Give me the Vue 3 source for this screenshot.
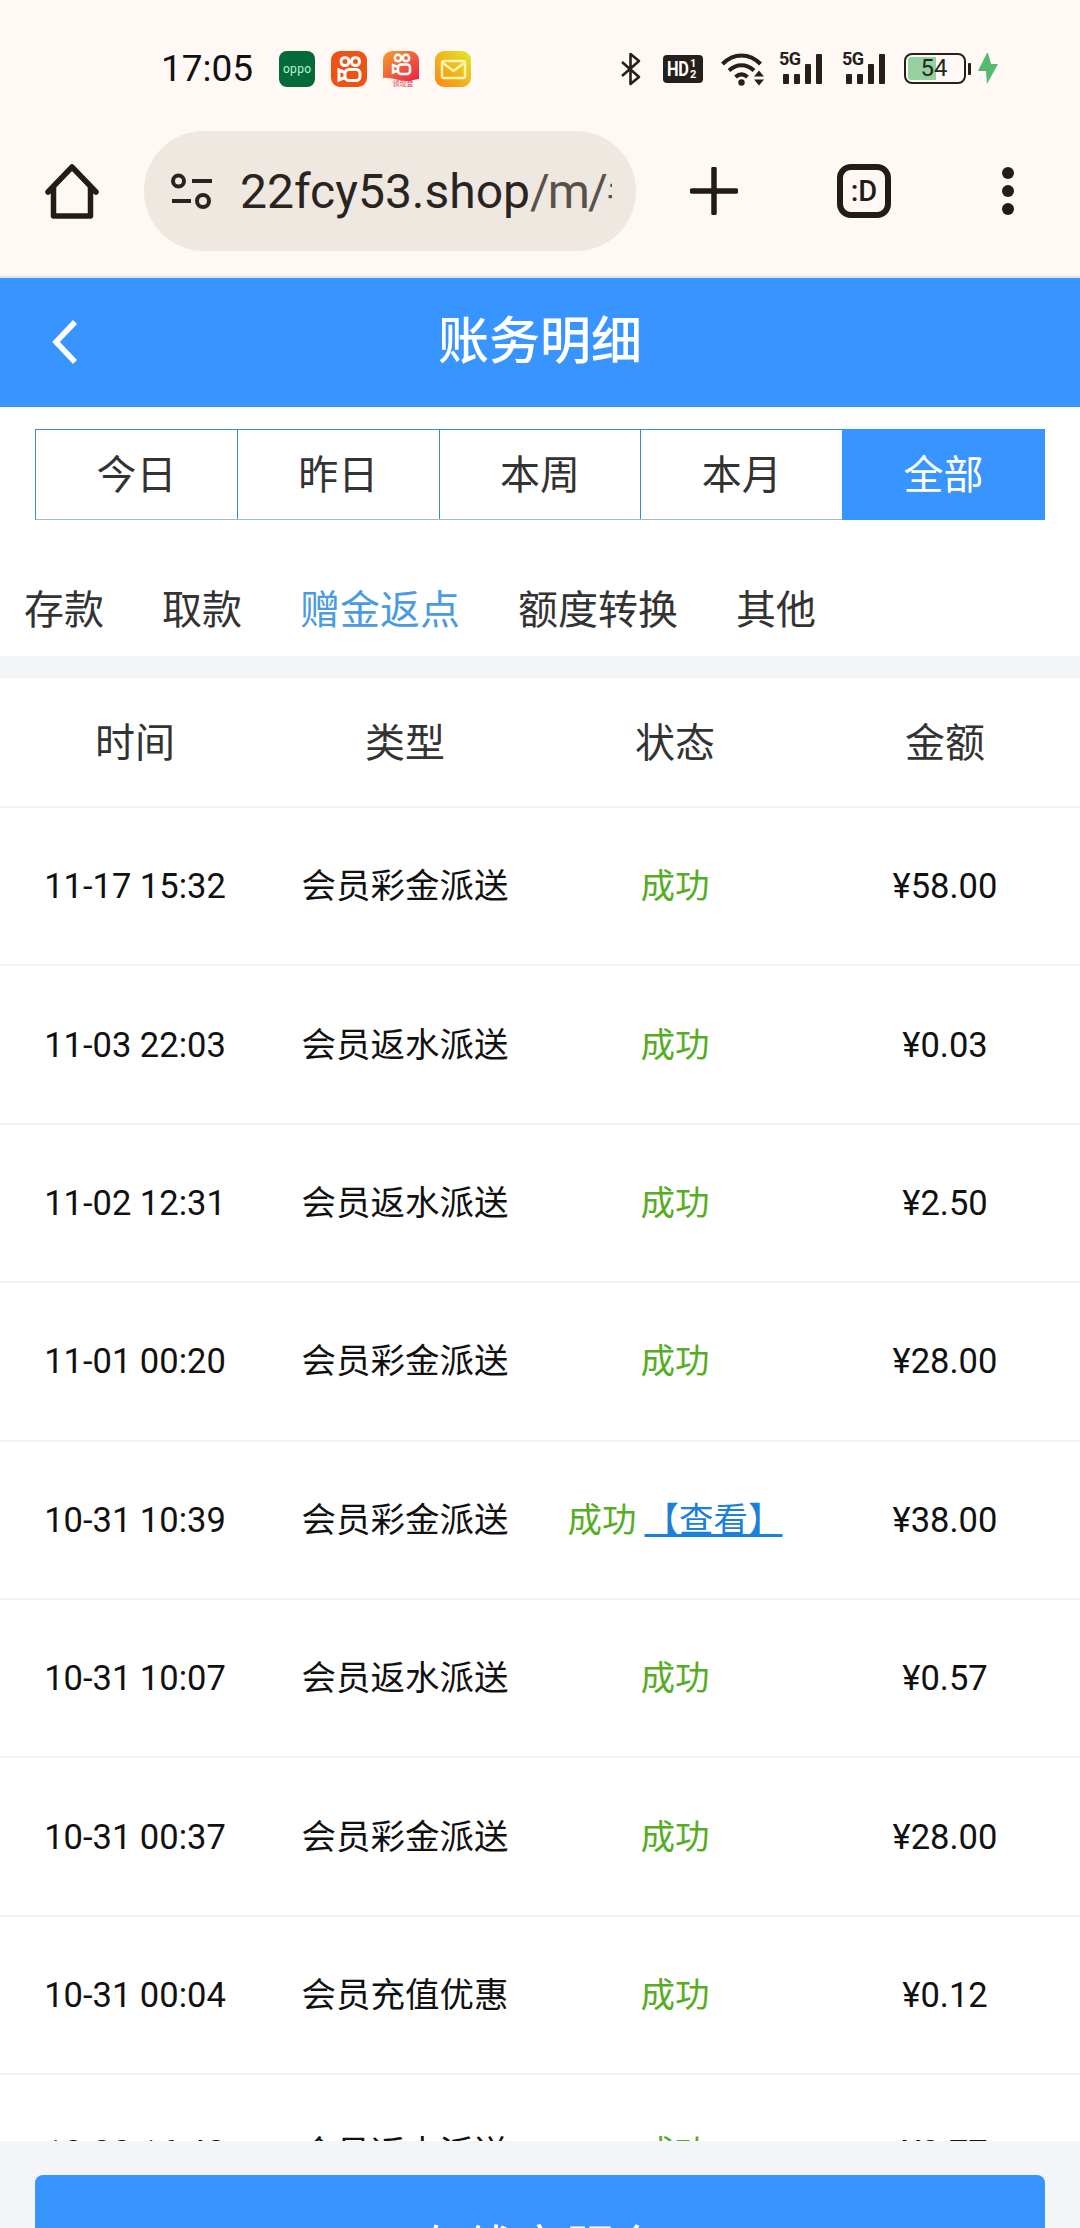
<template>
  <div class="screen">
    <div class="browser-top">
      <div class="status-bar">
        <span class="clock">17:05</span>
        <div class="notify-icons">
          <svg class="app-icon" viewBox="0 0 36 36">
            <rect width="36" height="36" rx="8" fill="#056a3a" />
            <text x="18" y="21.500" text-anchor="middle" font-size="12" textLength="28" fill="#b6f5cf" font-family="Roboto, sans-serif">oppo</text>
          </svg>
          <svg class="app-icon" viewBox="0 0 36 36">
            <rect width="36" height="36" rx="9" fill="#ee5215" />
            <g fill="none" stroke="#fff" stroke-width="3">
              <circle cx="14" cy="10.500" r="4" />
              <circle cx="24.500" cy="10.500" r="4" />
              <rect x="14" y="18.500" width="15" height="11" rx="4" />
              <path d="M14 21.500l-6-2.500v10l6-2.500" />
            </g>
          </svg>
          <svg class="app-icon" viewBox="0 0 36 36">
            <defs>
              <linearGradient id="kuaiGrad" x1="0" y1="0" x2="1" y2="1">
                <stop offset="0" stop-color="#f8a028" />
                <stop offset="1" stop-color="#ea1f4a" />
              </linearGradient>
            </defs>
            <path d="M0 9a9 9 0 0 1 9-9h18a9 9 0 0 1 9 9v19c-3 0-6 1-8 2C18 31 8 26 0 27z" fill="url(#kuaiGrad)" />
            <text x="20" y="35" text-anchor="middle" font-size="7" fill="#d8404f" font-family="'Noto Sans CJK SC', sans-serif">领现金</text>
            <g fill="none" stroke="#fff" stroke-width="2.500">
              <circle cx="15" cy="7" r="3.200" />
              <circle cx="23" cy="7" r="3.200" />
              <rect x="15" y="13.500" width="12" height="9.500" rx="3" />
              <path d="M15 16l-5-2v7.500l5-2" />
            </g>
          </svg>
          <svg class="app-icon" viewBox="0 0 36 36">
            <defs>
              <linearGradient id="mailGrad" x1="1" y1="0" x2="0" y2="1">
                <stop offset="0" stop-color="#e0ea28" />
                <stop offset="1" stop-color="#ff8412" />
              </linearGradient>
            </defs>
            <rect width="36" height="36" rx="9" fill="url(#mailGrad)" />
            <rect x="7" y="10" width="23" height="17" rx="2" fill="none" stroke="#fff3b0" stroke-width="2.500" />
            <path d="M8 12l10.500 8L29 12" fill="none" stroke="#fff3b0" stroke-width="2.500" />
          </svg>
        </div>
        <div class="system-icons">
          <svg class="bt" viewBox="0 0 22 34">
            <path d="M2 10l17 15-8.500 7V2L19 9 2 24" fill="none" stroke="#25201c" stroke-width="2.600" stroke-linejoin="round" />
          </svg>
          <div class="hd">
            <span class="hd-main">HD</span>
            <span class="hd-frac"><i>1</i><i>2</i></span>
          </div>
          <svg class="wifi" viewBox="0 0 44 34">
            <g fill="none" stroke="#25201c" stroke-width="4">
              <path d="M1.500 12c11-11.500 27-11.500 38 0" />
              <path d="M8 18.500c7.500-7 17.500-7 25 0" />
              <path d="M14.500 25c4-3.500 8-3.500 12 0" />
            </g>
            <circle cx="20.500" cy="30.500" r="3.200" fill="#25201c" />
            <path d="M33 24.500l5-6 5 6zM33 27.500l5 6 5-6z" fill="#25201c" />
          </svg>
          <div v-for="n in 2" :key="n" class="signal">
            <span class="signal-label">5G</span>
            <i class="bar low"></i>
            <i class="bar low"></i>
            <i class="bar mid"></i>
            <i class="bar high"></i>
          </div>
          <div class="battery">
            <div class="battery-body">
              <div class="battery-fill"></div>
              <span class="battery-num">54</span>
            </div>
            <i class="battery-cap"></i>
          </div>
          <svg class="bolt" viewBox="0 0 20 31">
            <path d="M9 0L0 18h8l1 13L20 11h-7L10 0z" fill="#55b96f" />
          </svg>
        </div>
      </div>

      <div class="toolbar">
        <svg class="tool-home" viewBox="0 0 54 55">
          <path d="M3 28L27 3l24 25M8.500 23v29h37V23" fill="none" stroke="#211c18" stroke-width="5.500" stroke-linejoin="round" stroke-linecap="round" />
        </svg>
        <div class="url-pill">
          <svg class="url-tune" viewBox="0 0 44 37">
            <g fill="none" stroke="#2a2420" stroke-width="4">
              <circle cx="8.500" cy="8" r="5.500" />
              <circle cx="33" cy="28" r="6" />
            </g>
            <path d="M22 8h20M2 28h19" stroke="#2a2420" stroke-width="4" />
          </svg>
          <div class="url-text">22fcy53.shop<span class="url-rest">/m/#</span></div>
        </div>
        <svg class="tool-plus" viewBox="0 0 48 48">
          <path d="M24 2v44M2 24h44" stroke="#211c18" stroke-width="5.500" stroke-linecap="round" />
        </svg>
        <div class="tool-tab">:D</div>
        <div class="tool-more">
          <i></i><i></i><i></i>
        </div>
      </div>
    </div>

    <div class="page-header">
      <svg class="back-arrow" viewBox="0 0 28 46">
        <path d="M24 3L5 23l19 20" fill="none" stroke="#fff" stroke-width="5.500" />
      </svg>
      <span class="page-title">账务明细</span>
    </div>

    <div class="date-tabs">
      <div
        v-for="item in dateTabs"
        :key="item"
        class="date-tab"
        :class="{ 'is-active': item === activeDate }"
      >
        {{ item }}
      </div>
    </div>

    <div class="type-tabs">
      <span
        v-for="item in typeTabs"
        :key="item"
        class="type-tab"
        :class="{ 'is-active': item === activeType }"
      >
        {{ item }}
      </span>
    </div>

    <div class="gap-band"></div>

    <div class="list-area">
      <div class="table-head">
        <div v-for="col in columns" :key="col" class="cell">{{ col }}</div>
      </div>
      <div v-for="row in rows" :key="row.time" class="table-row">
        <div class="cell">{{ row.time }}</div>
        <div class="cell cell-cn">{{ row.type }}</div>
        <div class="cell cell-cn status">
          成功<a v-if="row.link" class="view-link">【查看】</a>
        </div>
        <div class="cell">{{ row.amount }}</div>
      </div>
    </div>

    <div class="footer">
      <div class="footer-btn">在线客服台</div>
    </div>
  </div>
</template>

<script setup>
const dateTabs = ['今日', '昨日', '本周', '本月', '全部']
const activeDate = '全部'
const typeTabs = ['存款', '取款', '赠金返点', '额度转换', '其他']
const activeType = '赠金返点'
const columns = ['时间', '类型', '状态', '金额']

const rows = [
  { time: '11-17 15:32', type: '会员彩金派送', amount: '¥58.00' },
  { time: '11-03 22:03', type: '会员返水派送', amount: '¥0.03' },
  { time: '11-02 12:31', type: '会员返水派送', amount: '¥2.50' },
  { time: '11-01 00:20', type: '会员彩金派送', amount: '¥28.00' },
  { time: '10-31 10:39', type: '会员彩金派送', amount: '¥38.00', link: true },
  { time: '10-31 10:07', type: '会员返水派送', amount: '¥0.57' },
  { time: '10-31 00:37', type: '会员彩金派送', amount: '¥28.00' },
  { time: '10-31 00:04', type: '会员充值优惠', amount: '¥0.12' },
  { time: '10-30 16:42', type: '会员返水派送', amount: '¥0.77' }
]
</script>

<style>
html,
body {
  margin: 0;
  background: #fff;
  overflow: hidden;
}
</style>

<style scoped>
.screen {
  width: 1080px;
  height: 2228px;
  display: flex;
  flex-direction: column;
  overflow: hidden;
  font-family: Roboto, "Noto Sans CJK SC", sans-serif;
  background: #fff;
}

.browser-top {
  height: 278px;
  box-sizing: border-box;
  flex-shrink: 0;
  background: #fff8f5;
  border-bottom: 2px solid #e3e3e3;
}

.status-bar {
  height: 131px;
  padding: 6px 0 0 161px;
  box-sizing: border-box;
  display: flex;
  align-items: center;
}

.clock {
  width: 118px;
  flex-shrink: 0;
  font-size: 37px;
  color: #111;
}

.notify-icons {
  display: flex;
  gap: 16px;
}

.app-icon {
  width: 36px;
  height: 36px;
  display: block;
}

.system-icons {
  margin-left: 149px;
  display: flex;
  align-items: center;
}

.bt {
  width: 22px;
  height: 34px;
}

.hd {
  width: 40px;
  height: 28px;
  margin-left: 21px;
  border-radius: 4px;
  background: #25201c;
  color: #fff;
  display: flex;
  align-items: center;
  overflow: hidden;
  font-weight: 700;
}

.hd-main {
  font-size: 21px;
  width: 24px;
  margin-left: 4px;
  transform: scaleX(0.78);
  transform-origin: left;
  letter-spacing: -0.5px;
}

.hd-frac {
  display: flex;
  flex-direction: column;
  font-size: 11px;
  line-height: 11px;
  margin-left: -1px;
}

.hd-frac i {
  font-style: normal;
}

.wifi {
  width: 44px;
  height: 34px;
  margin-left: 18px;
}

.signal {
  position: relative;
  width: 46px;
  height: 31px;
  margin-left: 14px;
  display: flex;
  align-items: flex-end;
  gap: 5px;
  padding-left: 4px;
  box-sizing: border-box;
}

.signal + .signal {
  margin-left: 17px;
}

.signal-label {
  position: absolute;
  left: 0;
  top: -3px;
  font-size: 18px;
  line-height: 18px;
  font-weight: 700;
  color: #25201c;
  letter-spacing: -0.5px;
}

.bar {
  width: 6px;
  background: #25201c;
  border-radius: 1px;
}

.low {
  height: 10px;
}

.mid {
  height: 20px;
}

.high {
  height: 30px;
}

.battery {
  display: flex;
  align-items: center;
  margin-left: 16px;
}

.battery-body {
  position: relative;
  width: 62px;
  height: 31px;
  box-sizing: border-box;
  border: 2px solid #25201c;
  border-radius: 8px;
  padding: 2px;
  display: flex;
}

.battery-fill {
  width: 28px;
  height: 100%;
  background: #96d0a0;
  border-radius: 3px 0 0 3px;
}

.battery-num {
  position: absolute;
  left: 0;
  right: 2px;
  top: 0;
  bottom: 0;
  text-align: center;
  font-size: 24px;
  line-height: 27px;
  color: #1f2a20;
}

.battery-cap {
  width: 3px;
  height: 12px;
  margin-left: 2px;
  background: #25201c;
  border-radius: 1px;
}

.bolt {
  width: 20px;
  height: 31px;
  margin-left: 7px;
}

.toolbar {
  height: 145px;
  display: flex;
  align-items: center;
  padding-bottom: 25px;
  box-sizing: border-box;
}

.tool-home {
  width: 54px;
  height: 55px;
  margin-left: 45px;
  flex-shrink: 0;
}

.url-pill {
  width: 492px;
  height: 120px;
  margin-left: 45px;
  border-radius: 60px;
  background: #efe8e1;
  display: flex;
  align-items: center;
  flex-shrink: 0;
  box-sizing: border-box;
  padding-left: 26px;
  overflow: hidden;
}

.url-tune {
  width: 44px;
  height: 37px;
  flex-shrink: 0;
}

.url-text {
  margin-left: 26px;
  width: 372px;
  flex-shrink: 0;
  overflow: hidden;
  white-space: nowrap;
  font-size: 48px;
  color: #2a2420;
}

.url-rest {
  color: #5b5149;
  letter-spacing: -2px;
}

.tool-plus {
  width: 48px;
  height: 48px;
  margin-left: 54px;
  flex-shrink: 0;
}

.tool-tab {
  width: 54px;
  height: 54px;
  margin-left: 99px;
  box-sizing: border-box;
  border: 6px solid #211c18;
  border-radius: 14px;
  display: flex;
  align-items: center;
  justify-content: center;
  font-size: 29px;
  font-weight: 500;
  color: #211c18;
  flex-shrink: 0;
}

.tool-more {
  margin-left: 111px;
  display: flex;
  flex-direction: column;
  gap: 6px;
}

.tool-more i {
  width: 12px;
  height: 12px;
  border-radius: 50%;
  background: #211c18;
}

.page-header {
  position: relative;
  height: 129px;
  flex-shrink: 0;
  background: #3894ff;
  display: flex;
  align-items: center;
  justify-content: center;
}

.back-arrow {
  position: absolute;
  left: 51px;
  top: 41px;
  width: 28px;
  height: 46px;
}

.page-title {
  color: #fff;
  font-size: 51px;
  font-weight: 500;
  margin-top: -12px;
}

.date-tabs {
  margin: 22px 35px 0 35px;
  height: 91px;
  flex-shrink: 0;
  display: flex;
  box-sizing: border-box;
  border: 1px solid #3f88c8;
  border-bottom-color: #9dbdd6;
}

.date-tab {
  flex: 1;
  display: flex;
  align-items: center;
  justify-content: center;
  font-size: 40px;
  color: #333;
  border-right: 1px solid #3f88c8;
  padding-bottom: 6px;
}

.date-tab:last-child {
  border-right: 0;
}

.date-tab.is-active {
  background: #3894ff;
  color: #fff;
  box-shadow: 0 0 0 1px #3894ff;
}

.type-tabs {
  height: 136px;
  flex-shrink: 0;
  display: flex;
  align-items: center;
  gap: 58px;
  padding: 38px 0 0 24px;
  box-sizing: border-box;
}

.type-tab {
  font-size: 40px;
  color: #333;
}

.type-tab.is-active {
  color: #4a9be0;
}

.gap-band {
  height: 22px;
  flex-shrink: 0;
  background: #f4f5f7;
}

.list-area {
  height: 1463px;
  flex-shrink: 0;
  overflow: hidden;
  background: #fff;
}

.table-head,
.table-row {
  display: grid;
  grid-template-columns: repeat(4, 1fr);
  align-items: center;
  box-sizing: border-box;
  border-bottom: 2px solid #f3f3f3;
  text-align: center;
}

.table-head {
  height: 130px;
  color: #333;
  font-size: 40px;
  padding-bottom: 4px;
}

.table-row {
  height: 158.4px;
  color: #111;
  font-size: 34.500px;
}

.cell-cn {
  margin-top: -6px;
}

.status {
  color: #55ad23;
  white-space: nowrap;
}

.view-link {
  color: #1a80d8;
  margin-left: 8px;
  text-decoration: underline;
  text-decoration-thickness: 3px;
}

.footer {
  flex: 1;
  background: #f4f5f7;
  padding: 34px 35px 0;
}

.footer-btn {
  height: 140px;
  border-radius: 8px;
  background: #3894ff;
  color: #fff;
  font-size: 50px;
  display: flex;
  align-items: center;
  justify-content: center;
}
</style>
